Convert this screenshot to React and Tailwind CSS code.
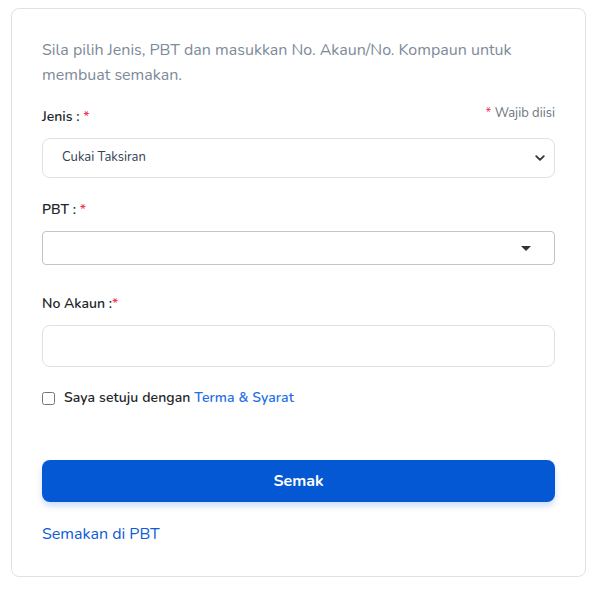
import { useState } from "react";

const font = { fontFamily: "Nunito, Lato, 'Open Sans', sans-serif" };

const Req = () => <span className="text-[#f5365c]">*</span>;

export default function App() {
  const [agree, setAgree] = useState(false);

  return (
    <div className="min-h-screen bg-white pt-[8px]" style={font}>
      <div className="ml-[11px] w-[575px] rounded-lg border border-[#dee2e6] bg-white px-[30px] pt-[29px] pb-[31px]">
        {/* Intro */}
        <p className="text-[16px] leading-[25px] text-[#7d8a99]">
          Sila pilih Jenis, PBT dan masukkan No. Akaun/No. Kompaun untuk membuat semakan.
        </p>

        {/* Jenis */}
        <div className="mt-[15px] flex items-start justify-between">
          <label className="mt-[4px] text-[14px] leading-[20px] font-semibold text-[#212529]">
            Jenis : <Req />
          </label>
          <span className="text-[13px] leading-[20px] text-[#6c757d]">
            <span className="text-[#f5365c]">*</span> Wajib diisi
          </span>
        </div>
        <div className="relative mt-[11px]">
          <select className="h-[40px] w-full appearance-none rounded-lg border border-[#dee2e6] bg-white pl-[19px] text-[13px] text-[#344054] outline-none">
            <option>Cukai Taksiran</option>
            <option>Kompaun</option>
          </select>
          <svg className="pointer-events-none absolute right-[10px] top-[15px]" width="10" height="10" viewBox="0 0 16 16">
            <path d="M2 5l6 6 6-6" fill="none" stroke="#343a40" strokeWidth="3" strokeLinecap="round" strokeLinejoin="round" />
          </svg>
        </div>

        {/* PBT */}
        <label className="mt-[22px] block text-[14px] leading-[20px] font-semibold text-[#212529]">
          PBT : <Req />
        </label>
        <div className="relative mt-[11px] h-[34px] w-full rounded border border-[#c4c4c4] bg-white">
          <span className="absolute right-[23px] top-[14px] h-0 w-0 border-x-[5px] border-t-[5px] border-x-transparent border-t-[#333]" />
        </div>

        {/* No Akaun */}
        <label className="mt-[29px] block text-[14px] leading-[20px] font-semibold text-[#212529]">
          No Akaun :<Req />
        </label>
        <input
          type="text"
          className="mt-[11px] h-[42px] w-full rounded-lg border border-[#dee2e6] bg-white px-3 text-[14px] outline-none"
        />

        {/* Terms */}
        <label className="mt-[21px] flex items-center gap-[9px] text-[14px] leading-[20px] font-semibold tracking-[0.1px] text-[#212529]">
          <input
            type="checkbox"
            checked={agree}
            onChange={(e) => setAgree(e.target.checked)}
            className="h-[13px] w-[13px]"
          />
          <span>
            Saya setuju dengan <a href="#" className="text-[#1f6fe5]">Terma &amp; Syarat</a>
          </span>
        </label>

        {/* Submit */}
        <button className="mt-[52px] h-[42px] w-full rounded-lg bg-[#0558d3] text-[16px] font-bold text-white shadow-[0_4px_6px_rgba(5,88,211,0.2)]">
          Semak
        </button>

        <a href="#" className="mt-[21px] block text-[16px] leading-[22px] text-[#0d5bd6]">
          Semakan di PBT
        </a>
      </div>
    </div>
  );
}
